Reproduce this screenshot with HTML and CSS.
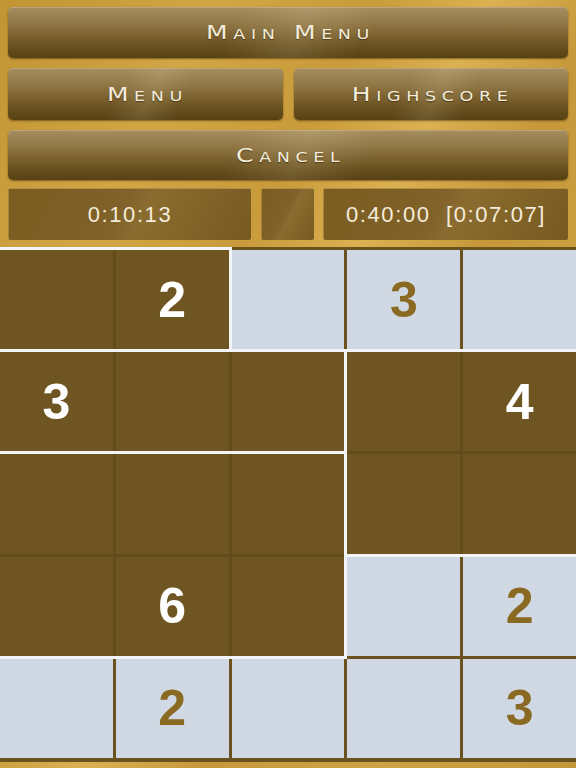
FILE: index.html
```html
<!DOCTYPE html>
<html lang="en">
<head>
    <meta charset="UTF-8">
    <meta name="viewport" content="width=device-width, initial-scale=1.0">
    <title>Shikaku</title>
    <link rel="stylesheet" href="styles.css">
</head>
<body>
    <div class="panel">
        <button class="menu-button"><span class="label">Main Menu</span></button>
        <div class="button-row">
            <button class="menu-button"><span class="label">Menu</span></button>
            <button class="menu-button"><span class="label">Highscore</span></button>
        </div>
        <button class="menu-button"><span class="label">Cancel</span></button>
        <div class="timers">
            <div class="timer">0:10:13</div>
            <div class="timer"></div>
            <div class="timer">0:40:00&nbsp;&nbsp;[0:07:07]</div>
        </div>
    </div>

    <div class="board">
        <!-- solved rectangles -->
        <div class="region region-a">
            <div class="sub"></div>
            <div class="sub">2</div>
        </div>
        <div class="region region-b">
            <div class="sub">3</div>
            <div class="sub"></div>
            <div class="sub"></div>
        </div>
        <div class="region region-c">
            <div class="sub"></div>
            <div class="sub">4</div>
            <div class="sub"></div>
            <div class="sub"></div>
        </div>
        <div class="region region-d">
            <div class="sub"></div>
            <div class="sub"></div>
            <div class="sub"></div>
            <div class="sub"></div>
            <div class="sub">6</div>
            <div class="sub"></div>
        </div>

        <!-- open cells fill the remaining slots in reading order -->
        <div class="cell"></div>
        <div class="cell">3</div>
        <div class="cell"></div>
        <div class="cell"></div>
        <div class="cell">2</div>
        <div class="cell"></div>
        <div class="cell">2</div>
        <div class="cell"></div>
        <div class="cell"></div>
        <div class="cell">3</div>
    </div>
</body>
</html>
```

FILE: styles.css
```css
:root {
    --board-line: #6b521e;
    --region-bg: #6e5521;
    --region-line: #644b1b;
    --region-edge: #f3f5f8;
    --cell-bg: #cfd8e3;
    --cell-text: #8a6a22;
    --label-color: #f4ecda;
}

html, body {
    margin: 0;
    padding: 0;
}
body {
    width: 576px;
    height: 768px;
    overflow: hidden;
    font-family: 'Liberation Sans', Arial, sans-serif;
    background: linear-gradient(118deg,
        #c29434 0%, #d2a644 22%, #c99b3a 38%,
        #dcb152 50%, #c6983a 62%, #cfa343 80%, #c3963a 100%);
}

.panel {
    display: flex;
    flex-direction: column;
    gap: 10px;
    padding: 7px 8px 0 8px;
    height: 240px;
    box-sizing: border-box;
}
.button-row {
    display: grid;
    grid-template-columns: 1fr 1fr;
    gap: 11px;
}
.menu-button {
    height: 52px;
    border: none;
    border-radius: 5px;
    padding: 0;
    font-family: 'DejaVu Sans', sans-serif;
    font-variant: small-caps;
    font-size: 20px;
    letter-spacing: 4.5px;
    color: var(--label-color);
    text-shadow: 0 1px 1px rgba(40, 28, 5, 0.6);
    background:
        linear-gradient(115deg, rgba(255, 255, 255, 0) 40%, rgba(255, 240, 200, 0.12) 52%, rgba(255, 255, 255, 0) 64%),
        linear-gradient(180deg, #a68e60 0%, #8f7544 35%, #6d5422 72%, #574114 100%);
    box-shadow: 0 1px 2px rgba(60, 40, 5, 0.55), inset 0 1px 0 rgba(255, 240, 210, 0.25);
}
/* wide engraved-style caps */
.label {
    display: inline-block;
    margin-right: -4.5px;
    transform: scaleX(1.25);
}

.timers {
    display: grid;
    grid-template-columns: 243px 53px 1fr;
    gap: 9.5px;
    margin-top: -2px;
}
.timer {
    height: 52px;
    box-sizing: border-box;
    display: flex;
    align-items: center;
    justify-content: center;
    font-size: 22px;
    letter-spacing: 1.6px;
    color: var(--label-color);
    border-top: 1px solid #b08f45;
    border-left: 1px solid #a5843c;
    border-radius: 2px;
    background: linear-gradient(118deg, #7b5d20 0%, #80622a 45%, #8b6c30 55%, #765a1f 100%);
}

.board {
    margin-top: 7px;
    display: grid;
    grid-template-columns: repeat(5, 1fr);
    grid-template-rows: repeat(5, 99.2px);
    gap: 3px;
    padding: 3px 0 4px 0;
    background-color: var(--board-line);
}

.cell, .sub {
    display: flex;
    align-items: center;
    justify-content: center;
    font-size: 50px;
    font-weight: 700;
}
.cell {
    background-color: var(--cell-bg);
    color: var(--cell-text);
}

.region {
    display: grid;
    gap: 3px;
    background-color: var(--region-line);
    box-shadow: 0 0 0 3px var(--region-edge);
    position: relative;
    z-index: 1;
}
.sub {
    background-color: var(--region-bg);
    color: #fff;
}
.region-a {
    grid-row: 1;
    grid-column: 1 / 3;
    grid-template-columns: 1fr 1fr;
    grid-template-rows: 1fr;
}
.region-b {
    grid-row: 2;
    grid-column: 1 / 4;
    grid-template-columns: repeat(3, 1fr);
    grid-template-rows: 1fr;
}
.region-c {
    grid-row: 2 / 4;
    grid-column: 4 / 6;
    grid-template-columns: 1fr 1fr;
    grid-template-rows: 1fr 1fr;
}
.region-d {
    grid-row: 3 / 5;
    grid-column: 1 / 4;
    grid-template-columns: repeat(3, 1fr);
    grid-template-rows: 1fr 1fr;
}
```
